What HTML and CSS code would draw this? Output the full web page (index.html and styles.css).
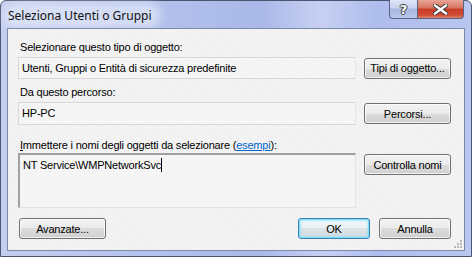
FILE: index.html
```html
<!DOCTYPE html>
<html lang="it">
<head>
    <meta charset="UTF-8">
    <title>Seleziona Utenti o Gruppi</title>
    <link rel="stylesheet" href="styles.css">
</head>
<body>
    <div class="window">
        <!-- barra del titolo -->
        <div class="titlebar">
            <span class="title">Seleziona Utenti o Gruppi</span>
            <div class="caption-buttons">
                <div class="cap-btn help">?</div>
                <div class="cap-btn close">
                    <svg width="15" height="11" viewBox="0 0 15 11">
                        <path d="M2 1.5 L13 9.5 M13 1.5 L2 9.5" stroke="#3b3b3b" stroke-width="4.4" stroke-linecap="square"/>
                        <path d="M2 1.5 L13 9.5 M13 1.5 L2 9.5" stroke="#ffffff" stroke-width="2.4" stroke-linecap="square"/>
                    </svg>
                </div>
            </div>
        </div>

        <!-- area client -->
        <div class="client">
            <div class="section type">
                <div class="label">Selezionare questo tipo di oggetto:</div>
                <div class="row">
                    <div class="field">Utenti, Gruppi o Entità di sicurezza predefinite</div>
                    <button class="btn">Tipi di oggetto...</button>
                </div>
            </div>

            <div class="section location">
                <div class="label">Da questo percorso:</div>
                <div class="row">
                    <div class="field tall">HP-PC</div>
                    <button class="btn">Percorsi...</button>
                </div>
            </div>

            <div class="section names-section">
                <div class="label"><u>I</u>mmettere i nomi degli oggetti da selezionare (<a href="#">esempi</a>):</div>
                <div class="row top">
                    <div class="names">NT Service\WMPNetworkSvc<span class="caret"></span></div>
                    <button class="btn">Controlla nomi</button>
                </div>
            </div>

            <div class="footer">
                <button class="btn">Avanzate...</button>
                <div class="footer-right">
                    <button class="btn default">OK</button>
                    <button class="btn">Annulla</button>
                </div>
            </div>

            <svg class="grip" width="9" height="9" viewBox="0 0 9 9">
                <rect x="7" y="1" width="2" height="2" fill="#b8b8b8"/>
                <rect x="4" y="4" width="2" height="2" fill="#b8b8b8"/>
                <rect x="7" y="4" width="2" height="2" fill="#b8b8b8"/>
                <rect x="1" y="7" width="2" height="2" fill="#b8b8b8"/>
                <rect x="4" y="7" width="2" height="2" fill="#b8b8b8"/>
                <rect x="7" y="7" width="2" height="2" fill="#b8b8b8"/>
            </svg>
        </div>
    </div>
</body>
</html>
```

FILE: styles.css
```css
* {
    box-sizing: border-box;
}

body {
    margin: 0;
    width: 472px;
    height: 257px;
    overflow: hidden;
    background: #ffffff;
    font-family: 'Liberation Sans', Arial, sans-serif;
    font-size: 11px;
    letter-spacing: -0.2px;
    color: #000;
}

/* cornice della finestra */
.window {
    width: 472px;
    height: 257px;
    border: 1px solid #4b5470;
    border-radius: 6px 6px 0 0;
    padding: 0 6px 5px 6px;
    background: linear-gradient(to right, #c3cdee 0%, #b5c2ed 30%, #a9b8e8 55%, #c7d0f3 68%, #aebded 80%, #b9c6ee 100%);
    display: flex;
    flex-direction: column;
}

/* barra del titolo */
.titlebar {
    height: 27px;
    display: flex;
    justify-content: space-between;
    align-items: flex-start;
    padding-left: 1px;
}

.title {
    font-family: 'Noto Sans', sans-serif;
    font-size: 12px;
    letter-spacing: 0;
    margin-top: 6px;
    padding: 0 4px 0 0;
    color: #111;
    background: rgba(235, 240, 252, 0.55);
    border-radius: 8px;
    box-shadow: 0 0 8px 5px rgba(235, 240, 252, 0.55);
}

.caption-buttons {
    display: flex;
    margin-top: -1px;
    margin-right: 1px;
}

.cap-btn {
    height: 19px;
    border: 1px solid #5a6482;
    border-top: none;
    display: flex;
    align-items: center;
    justify-content: center;
}

.help {
    width: 28px;
    border-radius: 0 0 0 4px;
    border-right: none;
    background: linear-gradient(#dfe5f7 0%, #c7d1f0 45%, #a9b6df 50%, #b9c6ee 100%);
    color: #fff;
    font-family: 'DejaVu Sans', sans-serif;
    font-weight: bold;
    font-size: 13px;
    text-shadow: 0 0 1px #333, 1px 0 0 #444, -1px 0 0 #444, 0 1px 0 #444, 0 -1px 0 #444;
}

.close {
    width: 47px;
    border-radius: 0 0 4px 0;
    background: linear-gradient(#e8a596 0%, #d7735f 45%, #c63b26 50%, #d24d37 85%, #e08a70 100%);
}

/* area client */
.client {
    position: relative;
    flex: 1;
    border: 1px solid #7d89ab;
    background-color: #f0f0f0;
    background-image: repeating-linear-gradient(45deg, rgba(255,255,255,0.35) 0 1px, transparent 1px 3px);
    padding: 11px 13px 0 10px;
}

.section.type {
    margin-bottom: 6px;
}

.section.location {
    margin-bottom: 13px;
}

.label {
    height: 14px;
    line-height: 14px;
    padding-left: 2px;
    margin-bottom: 3px;
}

.names-section .label {
    margin-bottom: 1px;
}

.label a {
    color: #0066cc;
}

.row {
    display: flex;
    align-items: center;
    gap: 8px;
}

.row.top {
    align-items: flex-start;
}

.field {
    width: 338px;
    height: 22px;
    line-height: 20px;
    padding-left: 3px;
    border: 1px solid #d8d8d8;
    border-right-color: #e6e6e6;
    background: rgba(246, 246, 246, 0.6);
}

.field.tall {
    height: 23px;
}

.names {
    width: 338px;
    height: 55px;
    padding: 3px 0 0 3px;
    line-height: 14px;
    border: 1px solid #e3e3e3;
    border-top: 2px solid #a0a0a0;
    border-left: 2px solid #a0a0a0;
    background: rgba(246, 246, 246, 0.6);
}

.caret {
    display: inline-block;
    width: 1px;
    height: 14px;
    background: #000;
    vertical-align: top;
}

/* pulsanti */
.btn {
    width: 87px;
    height: 21px;
    padding: 0;
    font-family: inherit;
    font-size: 11px;
    letter-spacing: inherit;
    color: #000;
    border: 1px solid #707070;
    border-radius: 3px;
    background: linear-gradient(#f2f2f2 0%, #ebebeb 50%, #dddddd 50%, #cfcfcf 100%);
    box-shadow: inset 0 0 0 1px rgba(255, 255, 255, 0.7);
}

.row.top .btn {
    margin-top: 1px;
}

.footer-right .btn {
    width: 72px;
}

.btn.default {
    border-color: #3c7fb1;
    background: linear-gradient(#f4f8fa 0%, #eaf0f3 50%, #dde4e8 50%, #d2dbe0 100%);
    box-shadow: inset 0 0 0 1px #7fdcfb, inset 0 0 2px 2px rgba(140, 225, 252, 0.6);
}

.footer {
    display: flex;
    justify-content: space-between;
    margin-top: 10px;
    padding-left: 1px;
}

.footer-right {
    display: flex;
    gap: 9px;
}

.grip {
    position: absolute;
    right: 2px;
    bottom: 2px;
}
```
